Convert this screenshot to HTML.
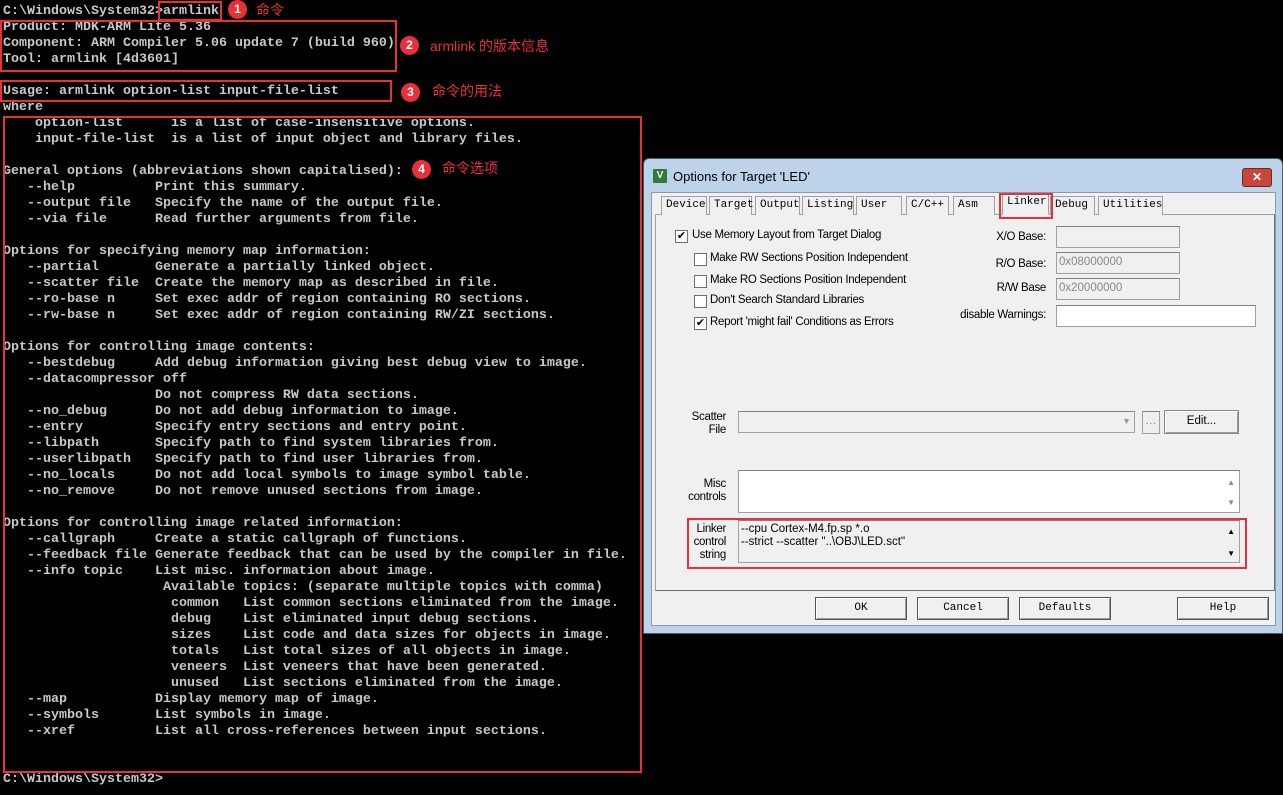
<!DOCTYPE html>
<html><head><meta charset="utf-8"><style>
*{margin:0;padding:0;box-sizing:border-box}
body{width:1283px;height:795px;background:#000;position:relative;overflow:hidden;font-family:"Liberation Sans",sans-serif}
pre{position:absolute;left:3px;top:4px;font-family:"Liberation Mono",monospace;font-size:13.33px;line-height:16px;color:#c8c8c8;font-weight:bold;letter-spacing:0}
.rb{position:absolute;border:2px solid #e8303a}
.c{position:absolute;width:19px;height:19px;border-radius:50%;background:#e8303a;color:#fff;font-size:12px;line-height:19px;text-align:center;font-weight:bold}
.lab{position:absolute;color:#e8303a;font-family:"Liberation Sans","Noto Sans CJK SC",sans-serif;font-size:14px}
.a{position:absolute}
.tab{position:absolute;top:196px;height:19px;border:1px solid #a0a0a0;border-bottom:none;background:#f0f0f0;font-family:"Liberation Mono",monospace;font-size:11px;line-height:17px;padding-left:4px;color:#000}
.t{font-size:11.5px;color:#000;position:absolute;letter-spacing:-0.3px;white-space:nowrap}
.r{text-align:right}
.cb{position:absolute;width:13px;height:13px;border:1px solid #707070;background:#fff;font-size:11px;line-height:11px;text-align:center}
.in{position:absolute;border:1px solid #a0a0a0;border-top-color:#808080;background:#f0f0f0;font-size:11.5px;color:#888;padding-left:2px;line-height:19px}
.btn{position:absolute;top:597px;width:92px;height:23px;border:1px solid #555;background:#f0f0f0;box-shadow:inset 1px 1px #fff,inset -1px -1px #999;font-family:"Liberation Mono",monospace;font-size:11px;text-align:center;line-height:21px}
</style></head><body>
<pre>C:\Windows\System32&gt;armlink
Product: MDK-ARM Lite 5.36
Component: ARM Compiler 5.06 update 7 (build 960)
Tool: armlink [4d3601]

Usage: armlink option-list input-file-list
where
    option-list      is a list of case-insensitive options.
    input-file-list  is a list of input object and library files.

General options (abbreviations shown capitalised):
   --help          Print this summary.
   --output file   Specify the name of the output file.
   --via file      Read further arguments from file.

Options for specifying memory map information:
   --partial       Generate a partially linked object.
   --scatter file  Create the memory map as described in file.
   --ro-base n     Set exec addr of region containing RO sections.
   --rw-base n     Set exec addr of region containing RW/ZI sections.

Options for controlling image contents:
   --bestdebug     Add debug information giving best debug view to image.
   --datacompressor off
                   Do not compress RW data sections.
   --no_debug      Do not add debug information to image.
   --entry         Specify entry sections and entry point.
   --libpath       Specify path to find system libraries from.
   --userlibpath   Specify path to find user libraries from.
   --no_locals     Do not add local symbols to image symbol table.
   --no_remove     Do not remove unused sections from image.

Options for controlling image related information:
   --callgraph     Create a static callgraph of functions.
   --feedback file Generate feedback that can be used by the compiler in file.
   --info topic    List misc. information about image.
                    Available topics: (separate multiple topics with comma)
                     common   List common sections eliminated from the image.
                     debug    List eliminated input debug sections.
                     sizes    List code and data sizes for objects in image.
                     totals   List total sizes of all objects in image.
                     veneers  List veneers that have been generated.
                     unused   List sections eliminated from the image.
   --map           Display memory map of image.
   --symbols       List symbols in image.
   --xref          List all cross-references between input sections.


C:\Windows\System32&gt;</pre>
<div class="rb" style="left:158px;top:1px;width:64px;height:20px"></div>
<div class="rb" style="left:0;top:20px;width:397px;height:52px"></div>
<div class="rb" style="left:0;top:80px;width:392px;height:22px"></div>
<div class="rb" style="left:3px;top:116px;width:639px;height:657px"></div>
<div class="c" style="left:228px;top:0">1</div><div class="lab" style="left:256px;top:0">命令</div>
<div class="c" style="left:400px;top:36px">2</div><div class="lab" style="left:430px;top:36px">armlink 的版本信息</div>
<div class="c" style="left:401px;top:83px">3</div><div class="lab" style="left:432px;top:81px">命令的用法</div>
<div class="c" style="left:412px;top:160px">4</div><div class="lab" style="left:442px;top:158px">命令选项</div>

<div class="a" style="left:643px;top:158px;width:640px;height:476px;background:#bcd3ea;border:1px solid #4a5a6a;border-radius:6px 6px 0 0"></div>
<div class="a" style="left:653px;top:169px;width:14px;height:14px;background:#2f7a3a;color:#fff;font-size:10px;line-height:14px;text-align:center;font-weight:bold">V</div>
<div class="a" style="left:673px;top:169px;font-size:13px;color:#000">Options for Target 'LED'</div>
<div class="a" style="left:1242px;top:168px;width:30px;height:19px;background:#c8463a;border:1px solid #6b2a20;border-radius:3px;color:#fff;font-size:12px;text-align:center;line-height:17px;font-weight:bold">✕</div>
<div class="a" style="left:651px;top:192px;width:625px;height:434px;background:#f0f0f0;border:1px solid #8a9aaa"></div>
<div class="a" style="left:655px;top:214px;width:620px;height:377px;border:1px solid #a0a0a0;border-right-color:#707070;border-bottom-color:#707070"></div>
<div class="tab" style="left:661px;width:46px">Device</div>
<div class="tab" style="left:709px;width:43px">Target</div>
<div class="tab" style="left:755px;width:45px">Output</div>
<div class="tab" style="left:802px;width:52px">Listing</div>
<div class="tab" style="left:856px;width:46px">User</div>
<div class="tab" style="left:906px;width:43px">C/C++</div>
<div class="tab" style="left:953px;width:42px">Asm</div>
<div class="tab" style="left:1002px;top:193px;height:22px;width:47px;z-index:2;border-bottom:1px solid #f0f0f0">Linker</div>
<div class="tab" style="left:1050px;width:45px">Debug</div>
<div class="tab" style="left:1098px;width:65px">Utilities</div>
<div class="rb" style="left:999px;top:193px;width:54px;height:26px;z-index:3"></div>

<div class="cb" style="left:675px;top:230px">✔</div><div class="t" style="left:692px;top:229px">Use Memory Layout from Target Dialog</div>
<div class="cb" style="left:694px;top:253px"></div><div class="t" style="left:710px;top:252px">Make RW Sections Position Independent</div>
<div class="cb" style="left:694px;top:275px"></div><div class="t" style="left:710px;top:274px">Make RO Sections Position Independent</div>
<div class="cb" style="left:694px;top:295px"></div><div class="t" style="left:710px;top:294px">Don't Search Standard Libraries</div>
<div class="cb" style="left:694px;top:317px">✔</div><div class="t" style="left:710px;top:316px">Report 'might fail' Conditions as Errors</div>
<div class="t r" style="left:946px;width:100px;top:231px">X/O Base:</div>
<div class="t r" style="left:946px;width:100px;top:258px">R/O Base:</div>
<div class="t r" style="left:946px;width:100px;top:282px">R/W Base</div>
<div class="t r" style="left:916px;width:130px;top:309px">disable Warnings:</div>
<div class="in" style="left:1056px;top:226px;width:124px;height:22px"></div>
<div class="in" style="left:1056px;top:252px;width:124px;height:22px">0x08000000</div>
<div class="in" style="left:1056px;top:278px;width:124px;height:22px">0x20000000</div>
<div class="in" style="left:1056px;top:305px;width:200px;height:22px;background:#fff"></div>

<div class="t r" style="left:676px;width:50px;top:411px;line-height:13px">Scatter<br>File</div>
<div class="in" style="left:738px;top:411px;width:397px;height:22px"><span style="position:absolute;right:3px;top:0;color:#999;font-size:9px">▼</span></div>
<div class="in" style="left:1142px;top:411px;width:18px;height:23px;background:#eee">…</div>
<div class="btn" style="left:1164px;top:410px;width:75px;height:24px;border-color:#888;font-family:'Liberation Sans',sans-serif;font-size:11.5px">Edit...</div>
<div class="t r" style="left:676px;width:50px;top:478px;line-height:13px">Misc<br>controls</div>
<div class="in" style="left:738px;top:470px;width:502px;height:43px;background:#fff"><span style="position:absolute;right:4px;top:2px;font-size:8px">▲</span><span style="position:absolute;right:4px;bottom:0;font-size:8px">▼</span></div>
<div class="t r" style="left:676px;width:50px;top:523px;line-height:13px">Linker<br>control<br>string</div>
<div class="in" style="left:738px;top:520px;width:502px;height:43px;color:#000;line-height:13px;padding-top:2px">--cpu Cortex-M4.fp.sp *.o<br>--strict --scatter "..\OBJ\LED.sct"<span style="position:absolute;right:4px;top:4px;font-size:8px">▲</span><span style="position:absolute;right:4px;bottom:2px;font-size:8px">▼</span></div>
<div class="rb" style="left:687px;top:518px;width:560px;height:51px"></div>
<div class="btn" style="left:815px">OK</div>
<div class="btn" style="left:917px">Cancel</div>
<div class="btn" style="left:1019px">Defaults</div>
<div class="btn" style="left:1177px">Help</div>
</body></html>
